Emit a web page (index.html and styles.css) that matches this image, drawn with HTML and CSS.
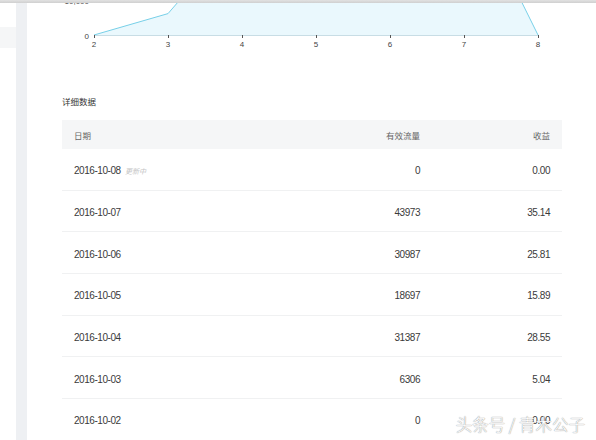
FILE: index.html
```html
<!DOCTYPE html>
<html>
<head>
<meta charset="utf-8">
<link rel="stylesheet" href="styles.css">
</head>
<body>
<div class="topbar"></div>
<div class="layout">
  <div class="leftcol"><div class="leftitem"></div></div>
  <div class="divider"></div>
  <main class="content">
    <svg class="chart" width="569" height="50" viewBox="0 0 569 50">
      <polygon points="67,33 141,11.6 215,-73.7 289,-30.6 363,-72.4 437,-116.5 511,33" fill="#eaf8fd"/>
      <polyline points="67,33 141,11.6 215,-73.7 289,-30.6 363,-72.4 437,-116.5 511,33" fill="none" stroke="#78d0e8" stroke-width="1"/>
      <line x1="67" y1="33.5" x2="511" y2="33.5" stroke="#c8dde5" stroke-width="1"/>
      <g stroke="#555" stroke-width="1">
        <line x1="67.5" y1="33" x2="67.5" y2="36"/>
        <line x1="141.5" y1="33" x2="141.5" y2="36"/>
        <line x1="215.5" y1="33" x2="215.5" y2="36"/>
        <line x1="289.5" y1="33" x2="289.5" y2="36"/>
        <line x1="363.5" y1="33" x2="363.5" y2="36"/>
        <line x1="437.5" y1="33" x2="437.5" y2="36"/>
        <line x1="511.5" y1="33" x2="511.5" y2="36"/>
      </g>
      <g class="axis-label" text-anchor="middle">
        <text x="67" y="44.5">2</text>
        <text x="141" y="44.5">3</text>
        <text x="215" y="44.5">4</text>
        <text x="289" y="44.5">5</text>
        <text x="363" y="44.5">6</text>
        <text x="437" y="44.5">7</text>
        <text x="511" y="44.5">8</text>
      </g>
      <g class="axis-label" text-anchor="end">
        <text x="62" y="36.5">0</text>
        <text x="62" y="2">10,000</text>
      </g>
    </svg>

    <h3 class="section-title">详细数据</h3>

    <div class="table">
      <div class="row head">
        <div class="cell">日期</div>
        <div class="cell num">有效流量</div>
        <div class="cell num">收益</div>
      </div>
      <div class="row">
        <div class="cell date">2016-10-08 <span class="tag">更新中</span></div>
        <div class="cell num">0</div>
        <div class="cell num">0.00</div>
      </div>
      <div class="row">
        <div class="cell date">2016-10-07</div>
        <div class="cell num">43973</div>
        <div class="cell num">35.14</div>
      </div>
      <div class="row">
        <div class="cell date">2016-10-06</div>
        <div class="cell num">30987</div>
        <div class="cell num">25.81</div>
      </div>
      <div class="row">
        <div class="cell date">2016-10-05</div>
        <div class="cell num">18697</div>
        <div class="cell num">15.89</div>
      </div>
      <div class="row">
        <div class="cell date">2016-10-04</div>
        <div class="cell num">31387</div>
        <div class="cell num">28.55</div>
      </div>
      <div class="row">
        <div class="cell date">2016-10-03</div>
        <div class="cell num">6306</div>
        <div class="cell num">5.04</div>
      </div>
      <div class="row">
        <div class="cell date">2016-10-02</div>
        <div class="cell num">0</div>
        <div class="cell num">0.00</div>
      </div>
    </div>
  </main>
</div>
<div class="watermark">头条号 / 青木公子</div>
</body>
</html>
```

FILE: styles.css
```css
html, body {
  margin: 0;
  padding: 0;
  background: #fff;
  width: 596px;
  height: 440px;
  overflow: hidden;
  font-family: "Liberation Sans", "Noto Sans CJK SC", sans-serif;
  color: #333;
}

.topbar {
  height: 3px;
  background: linear-gradient(#e2e2e2, #cfcfcf);
}

.layout {
  display: flex;
  height: 437px;
  overflow: hidden;
}

.leftcol {
  width: 16px;
  flex: none;
  padding-top: 24px;
}

.leftitem {
  height: 21px;
  background: #f5f6f7;
}

.divider {
  width: 11px;
  flex: none;
  background: #eef0f3;
}

.content {
  flex: 1;
  display: flex;
  flex-direction: column;
}

.content > * {
  flex: none;
}

.chart {
  display: block;
  overflow: hidden;
  margin-top: -1px;
}

.axis-label {
  font-family: "Liberation Sans", sans-serif;
  font-size: 8px;
  fill: #444;
}

.section-title {
  margin: 43px 0 0 35px;
  font-family: "Noto Sans CJK SC", sans-serif;
  font-size: 8.5px;
  font-weight: normal;
  line-height: 12px;
  color: #333;
}

.table {
  margin: 13px 0 0 35px;
  width: 500px;
}

.row {
  display: grid;
  grid-template-columns: 1fr 96px 130px;
  height: 41.7px;
  box-sizing: border-box;
  border-bottom: 1px solid #f0f1f2;
  align-items: center;
  padding-top: 3px;
}

.row.head {
  height: 29px;
  background: #f5f6f7;
  border-bottom: none;
  padding-top: 0;
}

.cell {
  padding: 0 12px;
  font-size: 10px;
  letter-spacing: -0.45px;
  white-space: nowrap;
  color: #3a3a3a;
}

.head .cell {
  font-family: "Noto Sans CJK SC", sans-serif;
  font-size: 8.5px;
  letter-spacing: 0;
  color: #666;
}

.num {
  text-align: right;
}

.tag {
  font-family: "Noto Sans CJK SC", sans-serif;
  font-size: 7px;
  font-style: italic;
  color: #c4c4c4;
  letter-spacing: 0;
  margin-left: 2px;
}

.watermark {
  position: absolute;
  right: 11px;
  bottom: 4px;
  font-family: "Noto Sans CJK SC", sans-serif;
  font-size: 16.5px;
  font-weight: 300;
  color: #fff;
  letter-spacing: 0;
  text-shadow: 0 0 1px #999, 0 0 1px #999;
}
```
